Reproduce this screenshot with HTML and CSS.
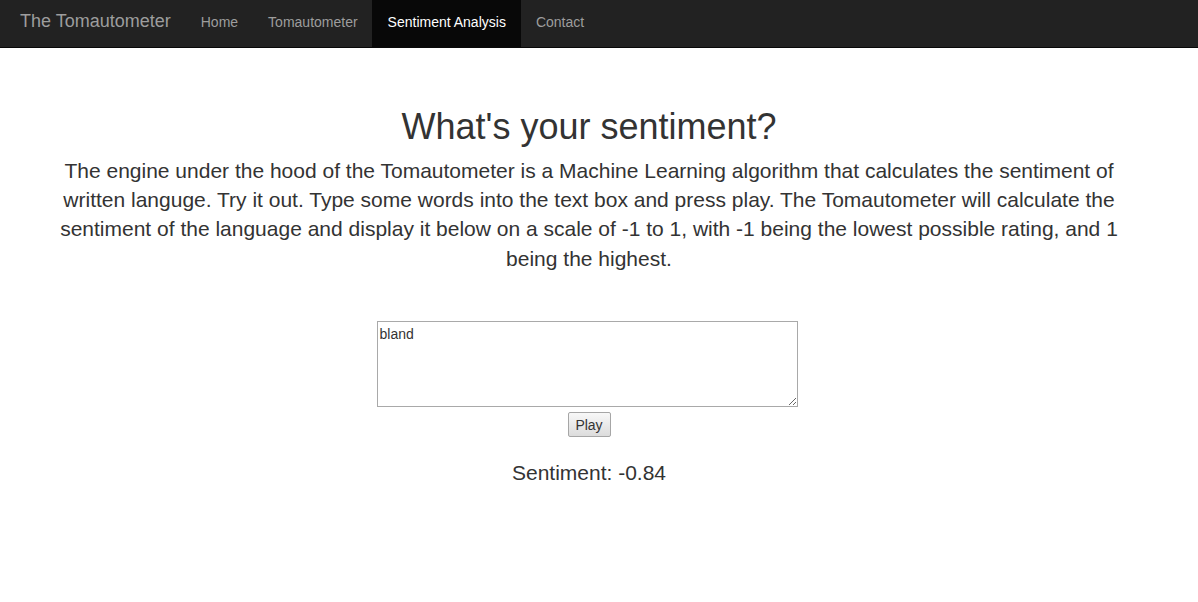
FILE: index.html
```html
<!DOCTYPE html>
<html lang="en">
<head>
<meta charset="utf-8">
<title>The Tomautometer - Sentiment Analysis</title>
<link rel="stylesheet" href="styles.css">
</head>
<body>
<nav class="navbar">
  <a class="brand" href="#">The Tomautometer</a>
  <ul class="nav">
    <li><a href="#">Home</a></li>
    <li><a href="#">Tomautometer</a></li>
    <li class="active"><a href="#">Sentiment Analysis</a></li>
    <li><a href="#">Contact</a></li>
  </ul>
</nav>
<main class="main">
  <h1 class="title">What's your sentiment?</h1>
  <p class="lead">The engine under the hood of the Tomautometer is a Machine Learning algorithm that calculates the sentiment of written languge. Try it out. Type some words into the text box and press play. The Tomautometer will calculate the sentiment of the language and display it below on a scale of -1 to 1, with -1 being the lowest possible rating, and 1 being the highest.</p>
  <form class="form">
    <textarea class="input">bland</textarea>
    <button type="button" class="play">Play</button>
  </form>
  <p class="result">Sentiment: -0.84</p>
</main>
</body>
</html>
```
FILE: styles.css
```css
* { box-sizing: border-box; }
html, body { margin: 0; padding: 0; }
body {
  font-family: "Liberation Sans", Arial, Helvetica, sans-serif;
  font-size: 14px;
  line-height: 1.42857;
  color: #333;
  background: #fff;
}
.navbar {
  display: flex;
  align-items: stretch;
  height: 48px;
  background: #222;
  border-bottom: 1px solid #080808;
}
.brand {
  display: block;
  margin-left: 5px;
  padding: 11px 15px 0;
  font-size: 18px;
  line-height: 20px;
  color: #9d9d9d;
  text-decoration: none;
}
.nav {
  display: flex;
  list-style: none;
  margin: 0;
  padding: 0;
}
.nav li { display: flex; }
.nav a {
  display: block;
  padding: 12px 15px 0;
  line-height: 20px;
  color: #9d9d9d;
  text-decoration: none;
}
.nav .active a {
  margin-left: -1px;
  padding-left: 16px;
  background: #080808;
  color: #fff;
}
.main {
  display: flex;
  flex-direction: column;
  align-items: center;
  padding: 0 20px 0 0;
  text-align: center;
}
.title {
  margin: 59px 0 9px;
  font-size: 36px;
  font-weight: 500;
  line-height: 1.1;
}
.lead {
  max-width: 1090px;
  margin: 0;
  font-size: 21px;
  font-weight: 300;
  line-height: 1.4;
}
.form {
  display: flex;
  flex-direction: column;
  align-items: center;
  margin-top: 48px;
}
.input {
  width: 421px;
  height: 86px;
  margin: 0 4px 0 0;
  padding: 4px 2px 2px;
  border: 1px solid #a9a9a9;
  font-family: "Liberation Sans", Arial, sans-serif;
  font-size: 14px;
  line-height: 16px;
  color: #333;
  resize: both;
}
.play {
  margin-top: 5px;
  width: 43px;
  height: 25px;
  padding: 0;
  border: 1px solid #a6a6a6;
  border-radius: 2px;
  background: linear-gradient(#f8f8f8, #dcdcdc);
  font-family: "Liberation Sans", Arial, sans-serif;
  font-size: 14px;
  color: #333;
}
.result {
  margin: 21px 0 0;
  font-size: 21px;
  line-height: 1.4;
}
```
